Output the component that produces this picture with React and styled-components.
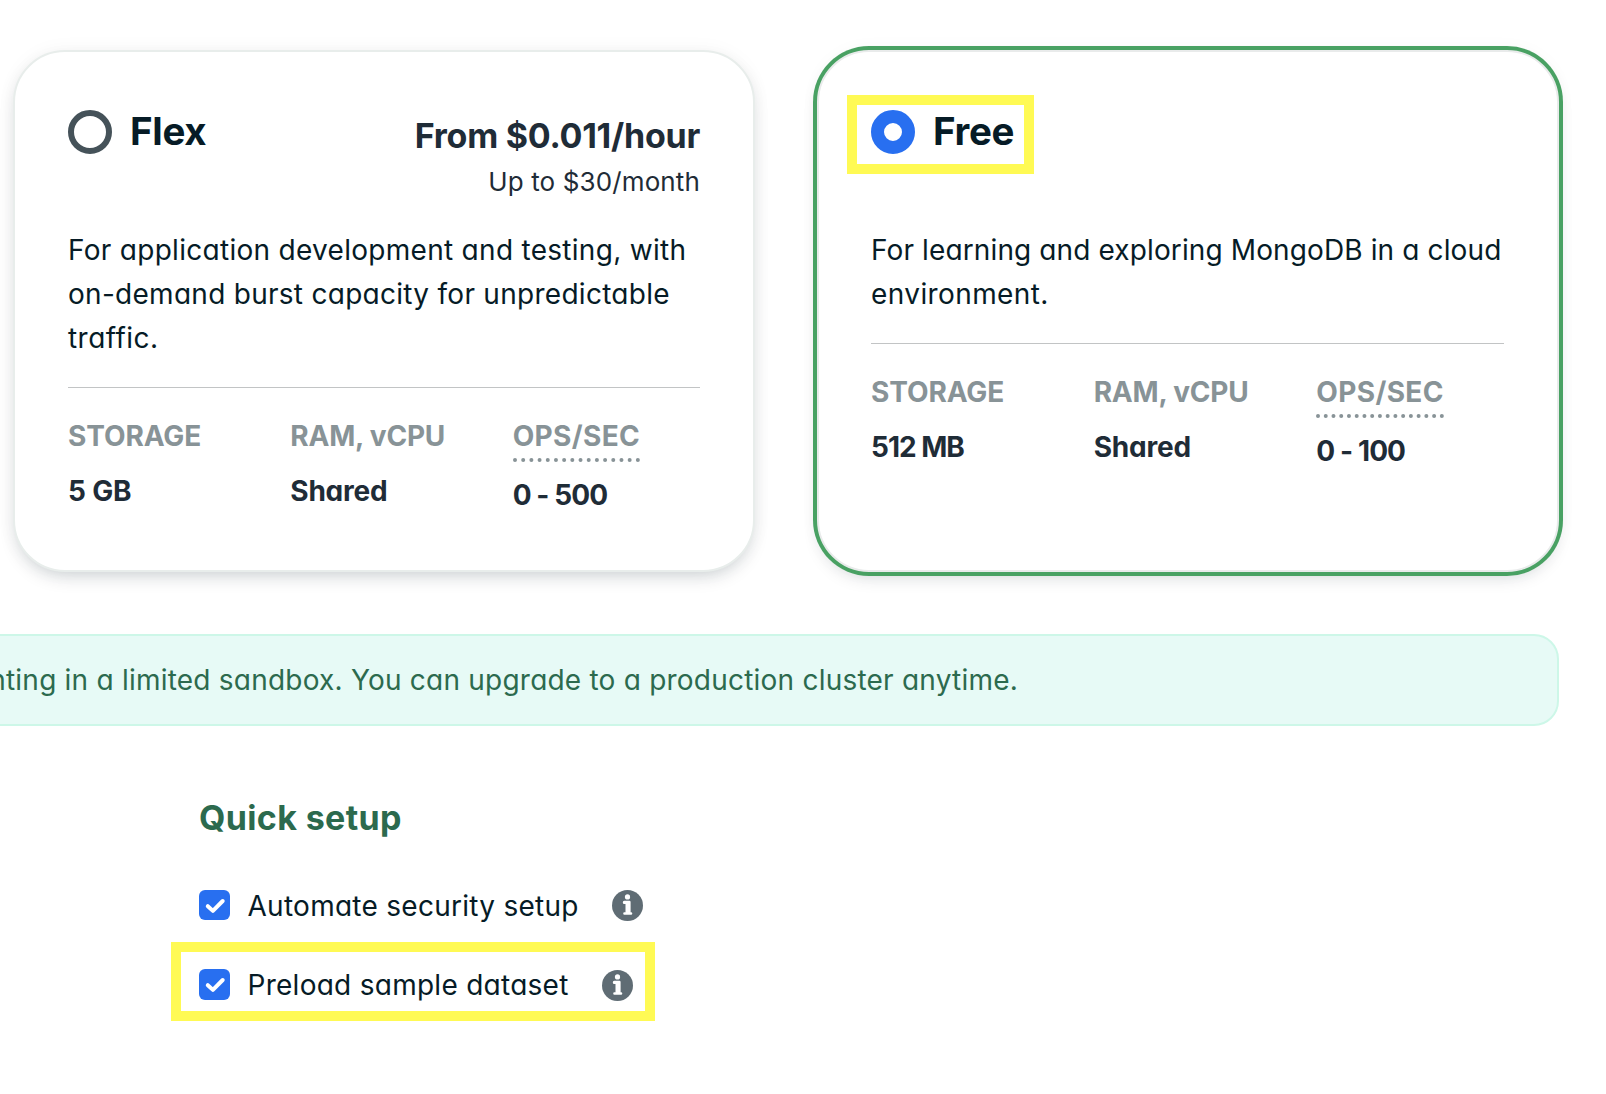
import React from "react";
import styled, { createGlobalStyle } from "styled-components";

const GlobalStyle = createGlobalStyle`
  *, *::before, *::after { box-sizing: border-box; }
  body {
    margin: 0;
    background: #fff;
    color: #061b26;
    font-family: Inter, "Liberation Sans", sans-serif;
    font-size: 28px;
    line-height: 44px;
    font-feature-settings: "cv11";
    overflow: hidden;
  }
`;

const Page = styled.main`
  width: 1606px;
  height: 1094px;
  padding-top: 50px;
  overflow: hidden;
`;

const Text = styled.span`
  letter-spacing: ${(p) => p.$track || 0}px;
  white-space: nowrap;
`;

const Cards = styled.div`
  display: grid;
  grid-template-columns: 742px 742px;
  column-gap: 62px;
  padding-left: 13px;
  height: 522px;
`;

const Card = styled.section`
  display: flex;
  flex-direction: column;
  padding: 58px 53px 0 ${(p) => (p.$selected ? 52 : 53)}px;
  background: #fff;
  border: 2px solid ${(p) => (p.$selected ? "#e9ebeb" : "#e8edeb")};
  border-radius: 52px;
  box-shadow: ${(p) => (p.$selected ? "0 0 0 4px #49a163, " : "")}
    0 8px 20px -7px rgba(0, 30, 43, 0.24), 0 0 20px rgba(0, 30, 43, 0.04);
`;

const Head = styled.header`
  display: flex;
  justify-content: space-between;
  height: 96px;
`;

const Option = styled.label`
  position: relative;
  display: flex;
  align-items: center;
  gap: 18px;
  height: 44px;
`;

const Radio = styled.span`
  width: 44px;
  height: 44px;
  border-radius: 50%;
  background: #fff;
  border: ${(p) => (p.$checked ? "13.5px solid #286ff0" : "6px solid #455259")};
`;

const PlanName = styled.h2`
  margin: 0;
  padding-bottom: 2px;
  font-size: 38.5px;
  font-weight: 700;
  line-height: 42px;
  letter-spacing: -0.3px;
`;

const Highlight = styled.span`
  position: absolute;
  inset: ${(p) => p.$inset};
  border: 10px solid #fffa54;
  pointer-events: none;
`;

const Pricing = styled.div`
  display: flex;
  flex-direction: column;
  align-items: flex-end;
  padding-top: 4px;
  color: #1f2c37;
`;

const Price = styled.strong`
  font-size: 34px;
  font-weight: 700;
`;

const PriceCap = styled.span`
  margin-top: 4px;
  font-size: 26px;
  line-height: 40px;
`;

const Description = styled.p`
  display: flex;
  flex-direction: column;
  margin: 22px 0 27px;
`;

const Specs = styled.dl`
  display: grid;
  grid-template-columns: repeat(3, 1fr);
  column-gap: 35px;
  margin: 0;
  padding-top: 26px;
  border-top: 1px solid #c2c4c5;
  font-weight: 650;
`;

const Spec = styled.div`
  display: flex;
  flex-direction: column;
  align-items: flex-start;
`;

const SpecLabel = styled.dt`
  color: #889397;
  border-bottom: ${(p) => (p.$hint ? "4px dotted #889397" : "none")};
`;

const SpecValue = styled.dd`
  margin: 11px 0 0;
  color: #1f2c37;
`;

const Banner = styled.div`
  display: flex;
  align-items: center;
  width: 1599px;
  height: 92px;
  margin: 62px 0 0 -40px;
  border: 2px solid #cdf7e8;
  border-radius: 25px;
  background: #e7faf6;
  color: #2c6a4e;
`;

const BannerText = styled.p`
  display: flex;
  justify-content: flex-end;
  width: 1056px;
  margin: 0;
`;

const Setup = styled.section`
  display: flex;
  flex-direction: column;
  align-items: flex-start;
  padding: 70px 0 0 199px;
`;

const SetupTitle = styled.h3`
  margin: 0 0 44px;
  font-size: 34px;
  font-weight: 700;
  color: #2c6a4e;
`;

const CheckRow = styled.label`
  position: relative;
  display: flex;
  align-items: flex-start;
  height: 43px;
  margin-bottom: 37px;
  line-height: ${(p) => p.$line}px;
`;

const Checkbox = styled.span`
  display: flex;
  width: 31px;
  height: ${(p) => p.$height}px;
  margin: ${(p) => p.$top}px 17.5px 0 0;
  border-radius: 6px;
  background: #286ff0;
`;

const Info = styled.svg`
  width: 31px;
  height: 31px;
  margin: 6px 0 0 33.4px;
`;

const plans = [
  {
    name: "Flex",
    price: "From $0.011/hour",
    cap: "Up to $30/month",
    lines: [
      ["For application development and testing, with", 0.29],
      ["on-demand burst capacity for unpredictable", 0.28],
      ["traffic.", 0.45],
    ],
    specs: [
      ["STORAGE", -0.1, "5 GB", -0.2],
      ["RAM, vCPU", -0.2, "Shared", -0.25],
      ["OPS/SEC", 0.35, "0 - 500", -0.9],
    ],
  },
  {
    name: "Free",
    selected: true,
    lines: [
      ["For learning and exploring MongoDB in a cloud", 0.12],
      ["environment.", 0.4],
    ],
    specs: [
      ["STORAGE", -0.1, "512 MB", -1],
      ["RAM, vCPU", -0.2, "Shared", -0.2],
      ["OPS/SEC", 0.35, "0 - 100", -0.9],
    ],
  },
];

function PlanCard({ plan }) {
  return (
    <Card $selected={plan.selected}>
      <Head>
        <Option>
          <Radio $checked={plan.selected} />
          <PlanName>{plan.name}</PlanName>
          {plan.selected && <Highlight $inset="-15px -20px -20px -24px" />}
        </Option>
        {plan.price && (
          <Pricing>
            <Price><Text $track={-0.25}>{plan.price}</Text></Price>
            <PriceCap><Text $track={0.13}>{plan.cap}</Text></PriceCap>
          </Pricing>
        )}
      </Head>
      <Description>
        {plan.lines.map(([line, track]) => (
          <Text key={line} $track={track}>{line}</Text>
        ))}
      </Description>
      <Specs>
        {plan.specs.map(([label, labelTrack, value, valueTrack]) => (
          <Spec key={label}>
            <SpecLabel $hint={label === "OPS/SEC"}>
              <Text $track={labelTrack}>{label}</Text>
            </SpecLabel>
            <SpecValue><Text $track={valueTrack}>{value}</Text></SpecValue>
          </Spec>
        ))}
      </Specs>
    </Card>
  );
}

function CheckMark() {
  return (
    <svg width="31" height="31" viewBox="0 0 31 31" fill="none">
      <path d="M8.8 16.2 13.9 20.9 23.7 11" stroke="#fff" strokeWidth="4" strokeLinecap="round" strokeLinejoin="round" />
    </svg>
  );
}

function InfoIcon() {
  return (
    <Info viewBox="0 0 31 31">
      <circle cx="15.5" cy="15.5" r="15.5" fill="#5f6c74" />
      <circle cx="15.5" cy="6.9" r="2.6" fill="#fff" />
      <path
        d="M12.2 10.8H17.4Q18.6 10.8 18.6 12V22.2H19.1Q20.3 22.2 20.3 23.5T19.1 24.8H12.4Q11.2 24.8 11.2 23.5T12.4 22.2H13.5V14H12.2Q10.8 14 10.8 12.4T12.2 10.8Z"
        fill="#fff"
      />
    </Info>
  );
}

export default function App() {
  return (
    <>
      <GlobalStyle />
      <Page>
        <Cards>
          {plans.map((plan) => (
            <PlanCard key={plan.name} plan={plan} />
          ))}
        </Cards>
        <Banner>
          <BannerText>
            <Text $track={0.22}>nting in a limited sandbox. You can upgrade to a production cluster anytime.</Text>
          </BannerText>
        </Banner>
        <Setup>
          <SetupTitle><Text $track={0.35}>Quick setup</Text></SetupTitle>
          <CheckRow $line={44}>
            <Checkbox $top={6} $height={30}><CheckMark /></Checkbox>
            <Text $track={0.27}>Automate security setup</Text>
            <InfoIcon />
          </CheckRow>
          <CheckRow $line={43}>
            <Checkbox $top={5} $height={31}><CheckMark /></Checkbox>
            <Text $track={0.27}>Preload sample dataset</Text>
            <InfoIcon />
            <Highlight $inset="-22px -22px -14px -28px" />
          </CheckRow>
        </Setup>
      </Page>
    </>
  );
}
